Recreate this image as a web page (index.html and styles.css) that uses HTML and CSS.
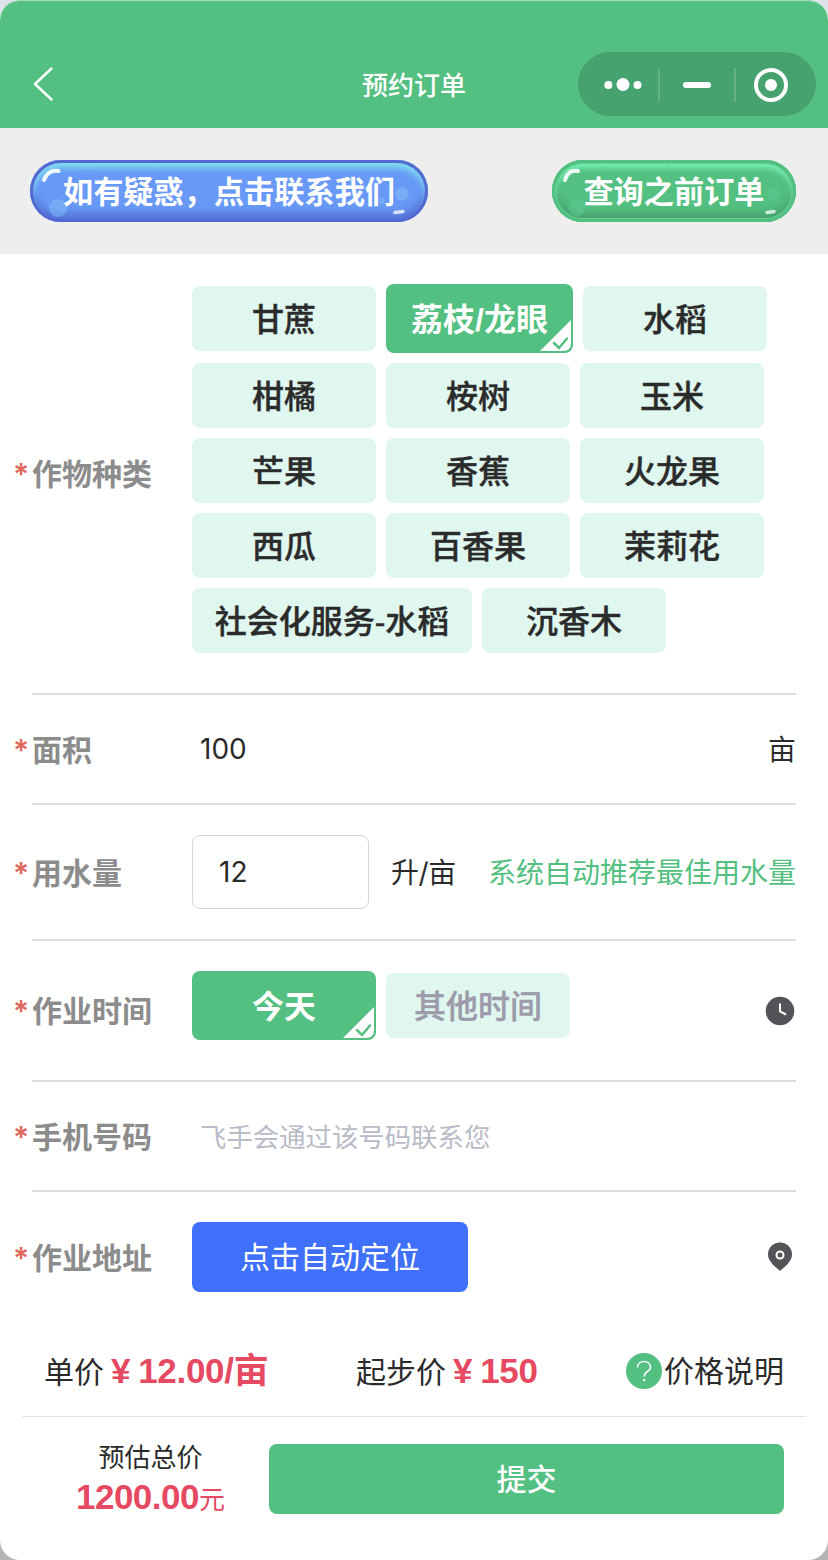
FILE: index.html
```html
<!DOCTYPE html>
<html lang="zh-CN">

<head>
    <meta charset="UTF-8">
    <meta name="viewport" content="width=device-width, initial-scale=1.0">
    <title>预约订单</title>
    <link rel="stylesheet" href="styles.css">
</head>

<body>
    <div class="page">
        <div class="navbar">
            <svg class="back" width="22" height="36" viewBox="0 0 22 36">
                <path d="M19.500 2.500L3 18L19.500 33.500" />
            </svg>
            <div class="title">预约订单</div>
            <div class="capsule">
                <svg width="38" height="16" viewBox="0 0 38 16">
                    <circle cx="4.300" cy="8" r="4" />
                    <circle cx="19" cy="7.500" r="6.500" />
                    <circle cx="33.500" cy="8" r="4" />
                </svg>
                <i></i>
                <svg width="28" height="6" viewBox="0 0 28 6">
                    <rect width="28" height="6" rx="3" />
                </svg>
                <i></i>
                <svg width="34" height="34" viewBox="0 0 34 34">
                    <circle class="ring" cx="17" cy="17" r="15" />
                    <circle cx="17" cy="17" r="6" />
                </svg>
            </div>
        </div>

        <div class="links">
            <a class="bubble blue">
                <svg width="398" height="62" viewBox="0 0 398 62">
                    <circle class="dot" cx="28" cy="48" r="9" />
                    <circle class="dot" cx="372" cy="34" r="6.500" />
                    <circle class="dot" cx="352" cy="41" r="3" />
                    <circle class="dot" cx="58" cy="7.500" r="2.500" />
                    <circle class="dot" cx="128" cy="6" r="2" />
                    <path class="shine" d="M14 20Q18 9 28.500 11" />
                    <path class="shine small" d="M365 52.500L373 51.500" />
                </svg>
                <span>如有疑惑，点击联系我们</span>
            </a>
            <a class="bubble green">
                <svg width="244" height="62" viewBox="0 0 244 62">
                    <circle class="dot" cx="25" cy="48" r="8.500" />
                    <circle class="dot" cx="221" cy="34" r="6" />
                    <circle class="dot" cx="53" cy="7.500" r="2" />
                    <circle class="dot" cx="117" cy="6" r="2" />
                    <path class="shine" d="M13 20Q16 9 26 11" />
                    <path class="shine small" d="M215 52.500L222 51.500" />
                </svg>
                <span>查询之前订单</span>
            </a>
        </div>

        <div class="form">
            <div class="row">
                <div class="label"><b>*</b>作物种类</div>
                <div class="chips">
                    <div class="chip">甘蔗</div>
                    <div class="chip active wide">荔枝/龙眼
                        <svg class="tick" width="31" height="31" viewBox="0 0 31 31">
                            <path class="corner" d="M31 0V23Q31 31 23 31H0Z" />
                            <path class="check" d="M14 23L19 28L27 18.500" />
                        </svg>
                    </div>
                    <div class="chip">水稻</div>
                    <div class="chip">柑橘</div>
                    <div class="chip">桉树</div>
                    <div class="chip">玉米</div>
                    <div class="chip">芒果</div>
                    <div class="chip">香蕉</div>
                    <div class="chip">火龙果</div>
                    <div class="chip">西瓜</div>
                    <div class="chip">百香果</div>
                    <div class="chip">茉莉花</div>
                    <div class="chip long">社会化服务-水稻</div>
                    <div class="chip">沉香木</div>
                </div>
            </div>

            <div class="row area">
                <div class="label"><b>*</b>面积</div>
                <div class="value">100</div>
                <div class="unit">亩</div>
            </div>

            <div class="row">
                <div class="label"><b>*</b>用水量</div>
                <div class="water">12</div>
                <div class="per">升/亩</div>
                <div class="tip">系统自动推荐最佳用水量</div>
            </div>

            <div class="row">
                <div class="label"><b>*</b>作业时间</div>
                <div class="chips">
                    <div class="chip active">今天
                        <svg class="tick" width="31" height="31" viewBox="0 0 31 31">
                            <path class="corner" d="M31 0V23Q31 31 23 31H0Z" />
                            <path class="check" d="M14 23L19 28L27 18.500" />
                        </svg>
                    </div>
                    <div class="chip other">其他时间</div>
                </div>
                <svg class="icon" width="32" height="30" viewBox="0 0 32 30">
                    <circle cx="16" cy="15" r="14.300" />
                    <path class="line" d="M16 7.500V15.500L22 18.500" />
                </svg>
            </div>

            <div class="row phone">
                <div class="label"><b>*</b>手机号码</div>
                <div class="placeholder">飞手会通过该号码联系您</div>
            </div>

            <div class="row last">
                <div class="label"><b>*</b>作业地址</div>
                <div class="locate">点击自动定位</div>
                <svg class="icon" width="32" height="30" viewBox="0 0 32 30">
                    <path d="M16 .5C9 .5 4 5.500 4 12.500C4 19.500 11 24.500 16 29C21 24.500 28 19.500 28 12.500C28 5.500 23 .5 16 .5Z" />
                    <circle class="line" cx="16" cy="13" r="3.500" />
                </svg>
            </div>
        </div>

        <div class="prices">
            <div class="unit-price">单价<strong><em>¥</em>12.00/亩</strong></div>
            <div class="start-price">起步价<strong><em>¥</em>150</strong></div>
            <div class="explain">
                <svg width="36" height="36" viewBox="0 0 36 36">
                    <circle cx="18" cy="18" r="18" />
                    <path d="M11.500 14.500C11.500 6.500 24.500 6.500 24.500 14.500C24.500 18.500 18.200 18.500 18.200 23.500" />
                    <circle class="point" cx="18.200" cy="27" r="1.200" />
                </svg>
                <span>价格说明</span>
            </div>
        </div>

        <div class="footer">
            <div class="total">
                <div>预估总价</div>
                <div class="sum"><strong>1200.00</strong>元</div>
            </div>
            <div class="submit">提交</div>
        </div>
    </div>
</body>

</html>
```

FILE: styles.css
```css
* {
    margin: 0;
    padding: 0;
    box-sizing: border-box;
}

body {
    background: linear-gradient(#dde1ea 50%, #b4b4b6 50%);
    font-family: "Inter", "Noto Sans CJK SC", sans-serif;
    color: #2b2b2b;
}

.page {
    width: 828px;
    height: 1560px;
    background-color: #fff;
    border-radius: 20px;
    overflow: hidden;
}

/* top bar */
.navbar {
    height: 128px;
    padding: 52px 12px 12px 32px;
    background-color: #53bf81;
    border-radius: 20px 20px 0 0;
    box-shadow: inset 0 1px 0 #a4dcbc;
    display: grid;
    grid-template-columns: 238px 1fr 238px;
    align-items: center;
}

.back {
    fill: none;
    stroke: #fff;
    stroke-width: 2.5;
    stroke-linecap: round;
    stroke-linejoin: round;
}

.title {
    padding: 0 20px 1px 0;
    text-align: center;
    color: #fff;
    font-size: 26px;
    font-weight: 500;
}

.capsule {
    height: 64px;
    padding: 1px 27px 0 25px;
    border: 1px solid #4f9e74;
    border-radius: 32px;
    background-color: #46a26e;
    display: flex;
    align-items: center;
    justify-content: space-between;
    fill: #fff;
}

.capsule i {
    width: 2px;
    height: 34px;
    margin: 0 0 0 -7px;
    background-color: #64b085;
}

.capsule i + svg + i {
    margin: 0 -5px 0 0;
}

.capsule .ring {
    fill: none;
    stroke: #fff;
    stroke-width: 4;
}

/* contact / history buttons */
.links {
    height: 126px;
    padding: 32px 32px 32px 30px;
    background-color: #eee;
    display: flex;
    justify-content: space-between;
}

.bubble {
    position: relative;
    height: 62px;
    border-radius: 31px;
    color: #fff;
    font-size: 30.2px;
    font-weight: 700;
    line-height: 64px;
    text-align: center;
}

.bubble svg {
    position: absolute;
    left: 0;
    top: 0;
}

.bubble span {
    position: relative;
}

.blue {
    width: 398px;
    background-color: #6899f6;
    box-shadow: inset 0 0 0 3px #5569d2, inset 0 6px 6px 2px #7fe0ee, inset 0 -7px 7px 2px #5674d8;
}

.green {
    width: 244px;
    background-color: #53bf81;
    box-shadow: inset 0 0 0 3px #53bf81, inset 0 0 0 4px #62cf94, inset 0 6px 6px 2px #78f2b6, inset 0 -6px 8px 2px #459b6b;
}

.dot {
    fill: #8bcaf5;
    opacity: .4;
}

.green .dot {
    fill: #62d29a;
}

.shine {
    fill: none;
    stroke: #fff;
    stroke-width: 4;
    stroke-linecap: round;
    opacity: .9;
}

.shine.small {
    stroke-width: 3.5;
    opacity: .75;
}

/* form */
.row {
    margin: 0 32px;
    padding: 30px 0;
    border-bottom: 2px solid #ddd;
    display: flex;
    align-items: center;
}

.label {
    width: 178px;
    margin-left: -18px;
    padding-top: 1px;
    flex-shrink: 0;
    color: #8c8c8c;
    font-size: 30px;
    font-weight: 700;
    line-height: 44px;
}

.label b {
    display: inline-block;
    width: 19px;
    margin-left: -1px;
    color: #e0695f;
    font-size: 30px;
    font-weight: 600;
}

.chips {
    margin-bottom: 10px;
    display: flex;
    flex-wrap: wrap;
    align-items: center;
    gap: 10px;
}

.chip {
    position: relative;
    width: 184px;
    height: 65px;
    border-radius: 8px;
    background-color: #e0f7ef;
    font-family: "Liberation Sans", "Noto Sans CJK SC", sans-serif;
    font-size: 32px;
    font-weight: 500;
    line-height: 68px;
    text-align: center;
    -webkit-text-stroke: .4px;
}

.chip.active {
    height: 69px;
    background-color: #53bf81;
    color: #fff;
    font-weight: 700;
    line-height: 72px;
    -webkit-text-stroke: 0;
}

.chip.wide {
    width: 187px;
}

.chip.long {
    width: 280px;
}

.chip.other {
    color: #9c9aab;
}

.tick {
    position: absolute;
    right: 2px;
    bottom: 2px;
}

.corner {
    fill: #fff;
}

.check {
    fill: none;
    stroke: #53bf81;
    stroke-width: 2.5;
    stroke-linecap: round;
}

.area,
.phone {
    height: 110px;
}

.value {
    flex: 1;
    padding-left: 8px;
    font-size: 28px;
}

.unit,
.per,
.tip {
    padding-bottom: 2px;
    font-size: 28px;
}

.water {
    width: 177px;
    height: 74px;
    padding-left: 26px;
    border: 1px solid #d4d5d9;
    border-radius: 8px;
    font-size: 28px;
    line-height: 72px;
}

.per {
    margin-left: 22px;
    letter-spacing: -.4px;
}

.tip {
    margin-left: auto;
    color: #53bf81;
}

.icon {
    margin-left: auto;
    fill: #535458;
}

.icon .line {
    fill: none;
    stroke: #fff;
    stroke-width: 2;
}

.placeholder {
    padding: 0 0 2px 8px;
    color: #b9bbc6;
    font-size: 26.4px;
}

.last {
    border-bottom: 0;
}

.locate {
    width: 276px;
    height: 70px;
    border-radius: 8px;
    background-color: #3e70fb;
    color: #fff;
    font-size: 30px;
    line-height: 70px;
    text-align: center;
}

/* price summary */
.prices {
    height: 95px;
    margin: 0 22px;
    padding: 4px 22px 0;
    border-bottom: 1px solid #e3e3e3;
    display: flex;
    align-items: center;
    font-size: 30px;
    line-height: 44px;
}

.unit-price {
    width: 312px;
}

.start-price {
    width: 270px;
}

.prices strong,
.total strong {
    color: #e64a62;
    font-family: "Liberation Sans", "Noto Sans CJK SC", sans-serif;
    font-size: 35px;
    letter-spacing: -.5px;
}

.prices strong {
    letter-spacing: -.3px;
}

.prices em {
    margin: 0 8px 0 7px;
    font-style: normal;
}

.explain {
    display: flex;
    align-items: center;
    gap: 2px;
    white-space: nowrap;
}

.explain svg {
    fill: #53bf81;
}

.explain path {
    fill: none;
    stroke: #fff;
    stroke-width: 1.6;
}

.explain .point {
    fill: #fff;
}

.footer {
    padding: 27px 44px 0 32px;
    display: flex;
}

.total {
    width: 237px;
    text-align: center;
    font-size: 26px;
    line-height: 28px;
}

.sum {
    color: #e64a62;
    line-height: 50px;
}

.submit {
    flex: 1;
    height: 70px;
    border-radius: 8px;
    background-color: #53bf81;
    color: #fff;
    font-size: 30px;
    font-weight: 500;
    line-height: 70px;
    text-align: center;
}
```
